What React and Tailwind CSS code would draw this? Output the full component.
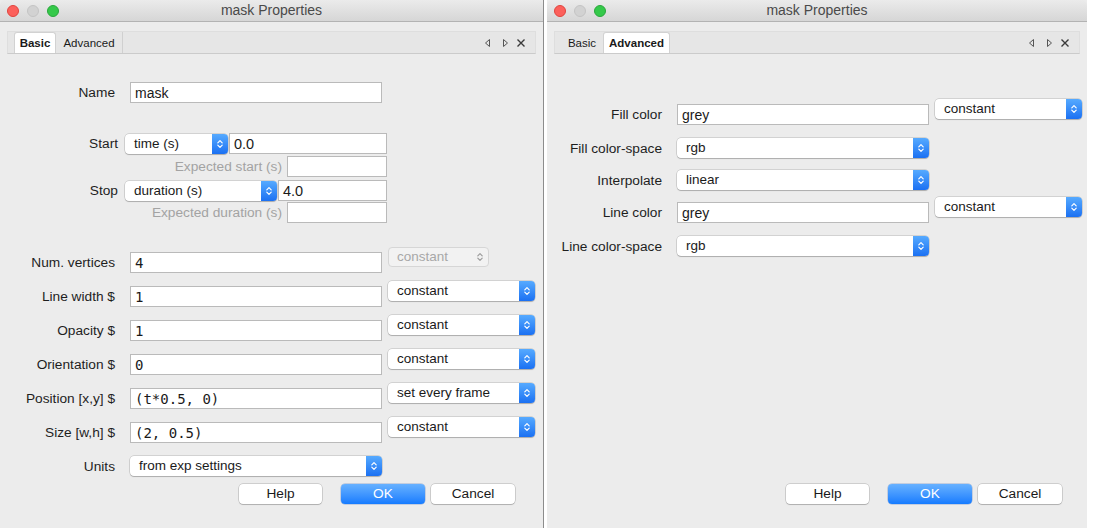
import React from 'react';

const SANS = "font-['Liberation_Sans',Arial,sans-serif]";
const MONO = "font-['DejaVu_Sans_Mono',monospace]";

const Chevrons = ({ color = '#ffffff' }) => (
  <svg width="8" height="12" viewBox="0 0 8 12" fill="none">
    <path d="M1.8 4.8 L4 2.6 L6.2 4.8" stroke={color} strokeWidth="1.2" strokeLinecap="round" strokeLinejoin="round" />
    <path d="M1.8 7.2 L4 9.4 L6.2 7.2" stroke={color} strokeWidth="1.2" strokeLinecap="round" strokeLinejoin="round" />
  </svg>
);

const Select = ({ text, className = '', disabled = false }) => {
  if (disabled) {
    return (
      <div className={`flex h-[20px] items-center rounded-[4px] border border-[#d6d6d6] bg-[#f2f2f2] ${className}`}>
        <span className="flex-1 pl-[8px] text-[13.5px] leading-none text-[#a8a8a8]">{text}</span>
        <div className="flex w-[16px] items-center justify-center">
          <Chevrons color="#9c9c9c" />
        </div>
      </div>
    );
  }
  return (
    <div className={`flex h-[20px] items-stretch rounded-[4px] bg-white shadow-[0_0_0_0.5px_rgba(0,0,0,0.22),0_1px_1px_rgba(0,0,0,0.18)] ${className}`}>
      <span className="flex flex-1 items-center pl-[9px] text-[13.5px] leading-none text-[#1a1a1a]">{text}</span>
      <div className="flex w-[16px] items-center justify-center rounded-r-[4px] bg-gradient-to-b from-[#56aaff] to-[#1b70f2]">
        <Chevrons />
      </div>
    </div>
  );
};

const Input = ({ value = '', mono = false, big = false, className = '' }) => (
  <div
    className={`flex h-[21px] items-center border border-[#bababa] bg-white pl-[4px] pt-[2px] text-[#1a1a1a] ${
      mono ? `${MONO} text-[14px]` : big ? 'text-[14.5px]' : 'text-[14px]'
    } ${className}`}
  >
    {value}
  </div>
);

const Label = ({ children, w = 'w-[115px]', gray = false }) => (
  <div className={`${w} shrink-0 text-right text-[13.7px] leading-[21px] ${gray ? 'text-[#a3a3a3]' : 'text-[#1e1e1e]'}`}>
    {children}
  </div>
);

const PropRow = ({ label, value, mono = true, mode = 'constant', disabled = false, className = '' }) => (
  <div className={`flex h-[26px] items-start ${className}`}>
    <div className="mt-[5px]">
      <Label>{label}</Label>
    </div>
    <Input value={value} mono={mono} className="ml-[15px] mt-[5px] w-[252px]" />
    <Select text={mode} disabled={disabled} className={`ml-[6px] ${disabled ? 'w-[101px]' : 'w-[147px]'}`} />
  </div>
);

const ChoiceRow = ({ label, text, className = '' }) => (
  <div className={`flex h-[26px] items-start ${className}`}>
    <div className="mt-[5px]">
      <Label>{label}</Label>
    </div>
    <Select text={text} className="ml-[15px] mt-[5px] w-[252px]" />
  </div>
);

const TitleBar = () => (
  <div className="grid h-[22px] shrink-0 grid-cols-[1fr_auto_1fr] items-center rounded-t-[5px] border-b border-[#b3b3b3] bg-gradient-to-b from-[#ebebeb] to-[#d6d6d6]">
    <div className="flex items-center gap-[8px] pl-[7px]">
      <span className="h-[12px] w-[12px] rounded-full border border-[#e0443e] bg-[#fc605b]" />
      <span className="h-[12px] w-[12px] rounded-full border border-[#c4c4c4] bg-[#d2d2d2]" />
      <span className="h-[12px] w-[12px] rounded-full border border-[#2aa73c] bg-[#35c94a]" />
    </div>
    <div className="text-[14px] text-[#4a4a4a]">mask Properties</div>
    <div />
  </div>
);

const TabBar = ({ active }) => (
  <div className="mx-[7px] mt-[9px] flex h-[23px] shrink-0 items-end border-x border-t border-[#dedede] border-b border-b-[#cbcbcb] bg-[#e6e6e6]">
    <div
      className={`ml-[6px] flex h-[21px] w-[42px] items-center justify-center pt-[2px] text-[11.5px] text-[#1a1a1a] ${
        active === 'Basic' ? 'rounded-t-[3px] border-x border-t border-[#d2d2d2] bg-white font-bold' : ''
      }`}
    >
      Basic
    </div>
    <div
      className={`flex h-[21px] w-[67px] items-center justify-center pt-[2px] text-[11.5px] text-[#1a1a1a] ${
        active === 'Advanced' ? 'rounded-t-[3px] border-x border-t border-[#d2d2d2] bg-white font-bold' : 'border-r border-[#d0d0d0]'
      }`}
    >
      Advanced
    </div>
    <div className="ml-auto mr-[9px] flex h-full items-center">
      <svg width="7" height="10" viewBox="0 0 7 10" fill="none">
        <path d="M5.5 1.5 L1.5 5 L5.5 8.5 Z" stroke="#555" strokeWidth="1" strokeLinejoin="round" />
      </svg>
      <svg className="ml-[11px]" width="7" height="10" viewBox="0 0 7 10" fill="none">
        <path d="M1.5 1.5 L5.5 5 L1.5 8.5 Z" stroke="#555" strokeWidth="1" strokeLinejoin="round" />
      </svg>
      <svg className="ml-[7px]" width="10" height="10" viewBox="0 0 10 10" fill="none">
        <path d="M1.5 1.5 L8.5 8.5 M8.5 1.5 L1.5 8.5" stroke="#3a3a3a" strokeWidth="1.4" />
      </svg>
    </div>
  </div>
);

const Buttons = () => (
  <div className="flex h-[20px] shrink-0">
    <div className="ml-[239px] flex w-[83px] items-center justify-center rounded-[4px] bg-white text-[13.7px] text-[#1a1a1a] shadow-[0_0_0_0.5px_rgba(0,0,0,0.25),0_1px_1px_rgba(0,0,0,0.15)]">
      Help
    </div>
    <div className="ml-[19px] flex w-[84px] items-center justify-center rounded-[4px] bg-gradient-to-b from-[#66b1ff] to-[#137bff] text-[13.7px] text-white shadow-[0_0_0_0.5px_rgba(0,60,160,0.35)]">
      OK
    </div>
    <div className="ml-[6px] flex w-[84px] items-center justify-center rounded-[4px] bg-white text-[13.7px] text-[#1a1a1a] shadow-[0_0_0_0.5px_rgba(0,0,0,0.25),0_1px_1px_rgba(0,0,0,0.15)]">
      Cancel
    </div>
  </div>
);

const BasicWindow = () => (
  <div className="flex h-[528px] w-[544px] shrink-0 flex-col border-r border-[#8c8c8c] bg-[#ececec]">
    <TitleBar />
    <TabBar active="Basic" />

    <div className="mt-[28px] flex h-[21px]">
      <Label>Name</Label>
      <Input value="mask" className="ml-[15px] w-[252px]" />
    </div>

    <div className="mt-[30px] flex h-[21px] items-center">
      <Label w="w-[118px]">Start</Label>
      <Select text="time (s)" className="ml-[7px] w-[103px]" />
      <Input value="0.0" big className="ml-[1px] w-[158px]" />
    </div>
    <div className="mt-[2px] flex h-[21px]">
      <Label w="w-[282px]" gray>Expected start (s)</Label>
      <Input className="ml-[5px] w-[100px]" />
    </div>
    <div className="mt-[3px] flex h-[21px] items-center">
      <Label w="w-[118px]">Stop</Label>
      <Select text="duration (s)" className="ml-[7px] w-[152px]" />
      <Input value="4.0" big className="ml-[1px] w-[109px]" />
    </div>
    <div className="mt-[1px] flex h-[21px]">
      <Label w="w-[282px]" gray>Expected duration (s)</Label>
      <Input className="ml-[5px] w-[100px]" />
    </div>

    <PropRow label="Num. vertices" value="4" disabled className="mt-[24px]" />
    <PropRow label="Line width $" value="1" className="mt-[8px]" />
    <PropRow label="Opacity $" value="1" className="mt-[8px]" />
    <PropRow label="Orientation $" value="0" className="mt-[8px]" />
    <PropRow label="Position [x,y] $" value="(t*0.5, 0)" mode="set every frame" className="mt-[8px]" />
    <PropRow label="Size [w,h] $" value="(2, 0.5)" className="mt-[8px]" />
    <ChoiceRow label="Units" text="from exp settings" className="mt-[8px]" />

    <div className="flex-1" />
    <Buttons />
    <div className="h-[24px] shrink-0" />
  </div>
);

const AdvancedWindow = () => (
  <div className="ml-[3px] flex h-[528px] w-[540px] shrink-0 flex-col bg-[#ececec]">
    <TitleBar />
    <TabBar active="Advanced" />

    <PropRow label="Fill color" value="grey" mono={false} className="mt-[45px]" />
    <ChoiceRow label="Fill color-space" text="rgb" className="mt-[8px]" />
    <ChoiceRow label="Interpolate" text="linear" className="mt-[6px]" />
    <PropRow label="Line color" value="grey" mono={false} className="mt-[6px]" />
    <ChoiceRow label="Line color-space" text="rgb" className="mt-[8px]" />

    <div className="flex-1" />
    <Buttons />
    <div className="h-[24px] shrink-0" />
  </div>
);

export default function App() {
  return (
    <div className={`flex h-[529px] w-[1100px] items-start overflow-hidden bg-white ${SANS}`}>
      <BasicWindow />
      <AdvancedWindow />
    </div>
  );
}
